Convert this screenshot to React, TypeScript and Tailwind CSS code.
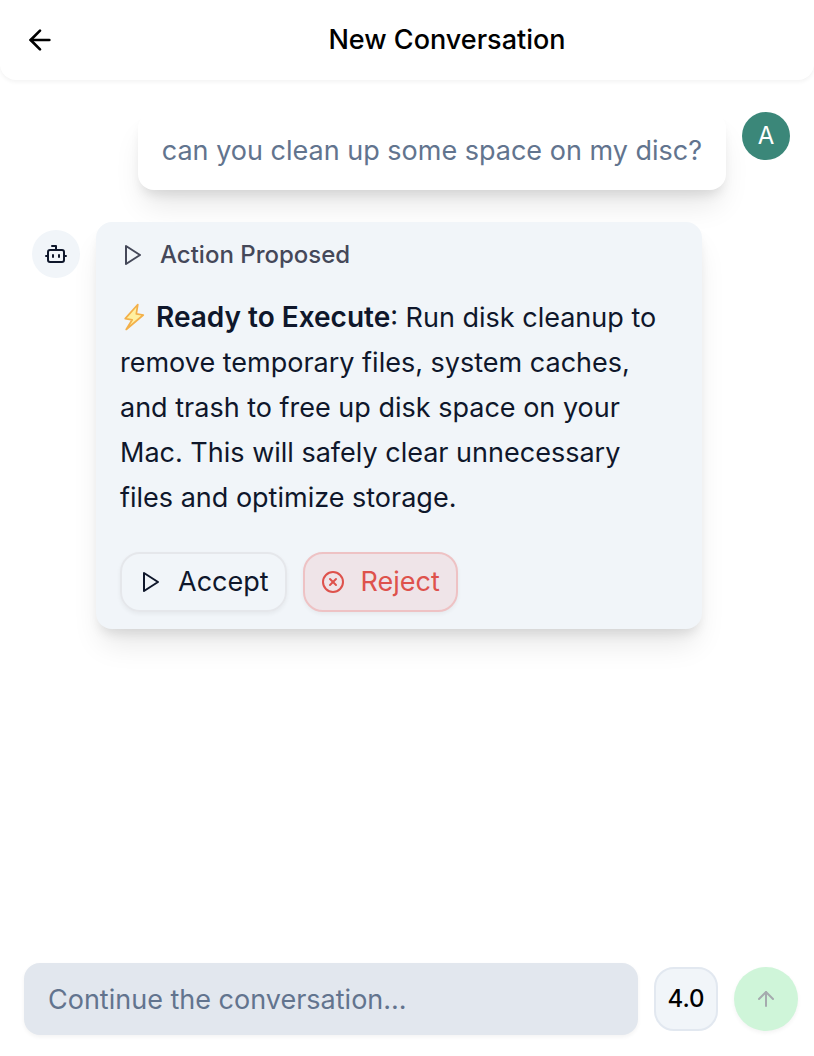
import { ArrowLeft, ArrowUp, Bot, CircleX } from "lucide-react";

const PlayIcon: React.FC = () => (
  <svg
    className="h-6 w-6 shrink-0"
    viewBox="0 0 24 24"
    fill="none"
    stroke="currentColor"
    strokeWidth="2"
    strokeLinejoin="round"
    aria-hidden="true"
  >
    <path d="M6 3 20 12 6 21Z" />
  </svg>
);

const BoltIcon: React.FC = () => (
  <svg
    className="mr-2 inline-block h-7 w-7 align-[-4px]"
    viewBox="0 0 28 28"
    role="img"
    aria-label="High voltage"
  >
    <path
      d="M17.800 1.500 5.200 15.600l7 1.200L6.200 26.500 23.300 12l-7-1.200Z"
      fill="#fff0a0"
      stroke="#f3b04a"
      strokeWidth="1.700"
      strokeLinejoin="round"
    />
  </svg>
);

const App: React.FC = () => {
  return (
    <div className="flex min-h-screen flex-col bg-white font-['Inter','Liberation_Sans',sans-serif] text-slate-900">
      <header className="flex h-20 items-center rounded-b-2xl bg-white px-6 shadow-[0_2px_4px_rgb(0_0_0/0.05)]">
        <button aria-label="Back" className="text-black">
          <ArrowLeft size={32} />
        </button>
        <h1 className="flex-1 pl-12 text-center text-[27px] font-medium text-black">
          New Conversation
        </h1>
      </header>

      <main className="flex flex-1 flex-col gap-8 px-6 pt-8">
        <div className="flex items-start justify-end gap-4">
          <p className="rounded-2xl bg-white px-6 py-4 text-[27px] leading-[46px] text-slate-500 shadow-[0_20px_30px_-6px_rgb(0_0_0/0.1),0_8px_12px_-4px_rgb(0_0_0/0.1)]">
            can you clean up some space on my disc?
          </p>
          <div className="flex h-12 w-12 shrink-0 items-center justify-center rounded-full bg-[#3b8779] text-2xl text-white">
            A
          </div>
        </div>

        <div className="flex items-start gap-4 pl-2">
          <div className="mt-2 flex h-12 w-12 shrink-0 items-center justify-center rounded-full bg-slate-100">
            <Bot size={24} />
          </div>
          <section className="max-w-[606px] rounded-2xl bg-slate-100 px-6 py-[17px] shadow-[0_20px_30px_-6px_rgb(0_0_0/0.1),0_8px_12px_-4px_rgb(0_0_0/0.1)]">
            <h2 className="flex items-center gap-4 text-2xl font-medium text-[#454859]">
              <PlayIcon />
              Action Proposed
            </h2>
            <p className="mt-6 text-[27px] leading-[45px]">
              <BoltIcon />
              <strong className="text-[28px] font-semibold">
                Ready to Execute
              </strong>
              : Run disk cleanup to remove temporary files, system caches, and
              trash to free up disk space on your Mac. This will safely clear
              unnecessary files and optimize storage.
            </p>
            <div className="mt-8 flex gap-4">
              <button className="flex h-15 items-center gap-4 rounded-[20px] border-2 border-gray-200 px-4 text-[27px] shadow-[0_2px_4px_rgb(0_0_0/0.05)]">
                <PlayIcon />
                Accept
              </button>
              <button className="flex h-15 items-center gap-4 rounded-[20px] border-2 border-[#eec2c4] bg-[#efe4e8] px-4 text-[27px] text-[#de524c] shadow-[0_2px_4px_rgb(0_0_0/0.05)]">
                <CircleX size={24} />
                Reject
              </button>
            </div>
          </section>
        </div>
      </main>

      <form className="flex items-center gap-4 pt-5 pr-4 pb-[21px] pl-6">
        <input
          type="text"
          aria-label="Message"
          placeholder="Continue the conversation..."
          className="h-18 min-w-0 flex-1 rounded-2xl bg-[#e2e7ee] px-6 text-[27px] shadow-[0_2px_4px_rgb(0_0_0/0.05)] placeholder:text-slate-500"
        />
        <button
          type="button"
          className="h-16 w-16 rounded-[20px] border-2 border-slate-200 bg-slate-100 text-2xl font-medium text-black"
        >
          4.0
        </button>
        <button
          type="submit"
          aria-label="Send"
          className="flex h-16 w-16 items-center justify-center rounded-full bg-[#cff5d9] text-[#a5aaae] shadow-[0_2px_4px_rgb(0_0_0/0.05)]"
        >
          <ArrowUp size={24} />
        </button>
      </form>
    </div>
  );
};

export default App;
